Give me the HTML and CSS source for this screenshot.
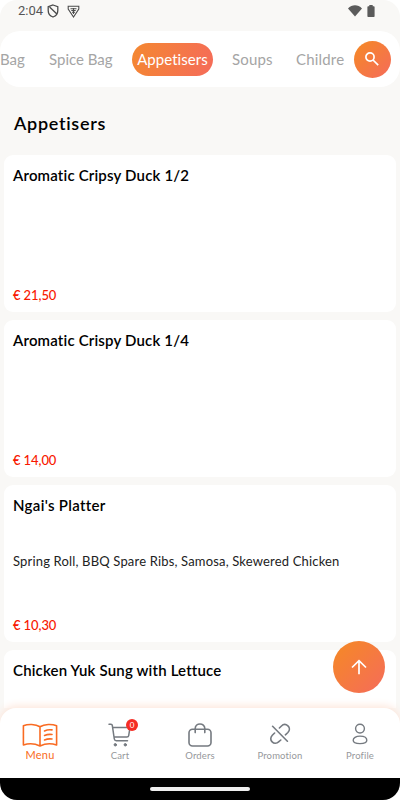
FILE: index.html
```html
<!DOCTYPE html>
<html lang="en">
<head>
<meta charset="utf-8">
<title>Menu</title>
<link rel="stylesheet" href="styles.css">
</head>
<body>
<div class="phone">
  <header class="status">
    <span class="clock">2:04</span>
    <svg class="shield" width="12" height="14" viewBox="0 0 12 14" fill="none" stroke="#4b4b4b" stroke-width="1.3"><path d="M6 1 L10.8 2.7 V6.5 C10.8 9.6 8.8 12 6 13 C3.2 12 1.2 9.6 1.2 6.5 V2.7 Z M2.6 3 L9.9 10"/></svg>
    <svg class="guard" width="13" height="13" viewBox="0 0 13 13" fill="none" stroke="#4b4b4b" stroke-width="1.1"><path d="M1.2 1.2 H11.8 V4 L6.5 12 L1.2 4 Z M3.5 3.7 H9.5 M4.3 5.5 H8.7 M5 7.2 H8 M6.5 3 V9"/></svg>
    <svg class="wifi" width="14" height="12" viewBox="0 0 14 12" fill="#5b5b5b"><path d="M0 3.4 C4-.9 10-.9 14 3.4 L7 11.4 Z"/></svg>
    <svg class="battery" width="8" height="12" viewBox="0 0 8 12" fill="#5b5b5b"><path d="M2.3 0 H5.7 V1.3 H6.8 Q7.6 1.3 7.6 2.1 V11.2 Q7.6 12 6.8 12 H1.2 Q.4 12 .4 11.2 V2.1 Q.4 1.3 1.2 1.3 H2.3 Z"/></svg>
  </header>
  <nav class="tabs">
    <div class="track">
      <span class="tab first">Bag</span>
      <span class="tab spice">Spice Bag</span>
      <span class="tab active">Appetisers</span>
      <span class="tab soups">Soups</span>
      <span class="tab">Childre</span>
    </div>
    <button class="search" aria-label="Search"><svg width="14" height="14" viewBox="0 0 14 14" fill="none" stroke="#fff" stroke-width="1.7"><circle cx="5" cy="5" r="4.1"/><path d="M8 8 L13.2 13.2"/></svg></button>
  </nav>
  <main class="content">
    <h1>Appetisers</h1>
    <section class="list">
      <article class="card"><h2>Aromatic Cripsy Duck 1/2</h2><p></p><b>€ 21,50</b></article>
      <article class="card"><h2>Aromatic Crispy Duck 1/4</h2><p></p><b>€ 14,00</b></article>
      <article class="card"><h2 class="platter">Ngai's Platter</h2><p>Spring Roll, BBQ Spare Ribs, Samosa, Skewered Chicken</p><b>€ 10,30</b></article>
      <article class="card"><h2>Chicken Yuk Sung with Lettuce</h2></article>
    </section>
  </main>
  <button class="top" aria-label="Back to top"><svg width="16" height="16" viewBox="0 0 16 16" fill="none" stroke="#fff" stroke-width="1.7"><path d="M8 15.3 V2 M1 8.5 L8 1.6 L15 8.5"/></svg></button>
  <footer class="bar">
    <a class="item current">
      <svg width="36" height="25" viewBox="0 0 36 25" fill="none" stroke="#f96b22" stroke-width="1.6" stroke-linejoin="round" stroke-linecap="round"><path d="M18 3.8 C13.5 1 6 .9 1.4 2.8 V22 C7 20.2 13 20.6 18 23 C23 20.6 29 20.2 34.6 22 V2.8 C30 .9 22.5 1 18 3.8 V23 M22.5 7.9 Q26 6.3 30 6.9 M22.5 12.4 Q26 11 30 11.5 M22.5 16.9 Q26 15.5 30 16"/></svg>
      <span>Menu</span>
    </a>
    <a class="item cart">
      <svg width="24" height="24" viewBox="0 0 24 24" fill="none" stroke="#757a80" stroke-width="1.5" stroke-linecap="round" stroke-linejoin="round"><path d="M1 1.2 H3 Q4 1.2 4.3 2.3 L6.3 16 Q6.6 17.8 8.2 17.8 H19.5 M5 4.4 H22 L20.7 12.6 Q20.4 14 19 14 H6.2"/><circle cx="7.3" cy="21.8" r="1.2" fill="#757a80" stroke-width="1"/><circle cx="17.3" cy="21.8" r="1.2" fill="#757a80" stroke-width="1"/></svg>
      <i class="badge">0</i>
      <span>Cart</span>
    </a>
    <a class="item orders">
      <svg width="24" height="24" viewBox="0 0 24 24" fill="none" stroke="#757a80" stroke-width="1.6" stroke-linecap="round"><rect x="1" y="6.3" width="22" height="16.7" rx="3.5"/><path d="M7.2 9.6 V5.6 C7.2-.6 16.8-.6 16.8 5.6 V9.6"/></svg>
      <span>Orders</span>
    </a>
    <a class="item promo">
      <svg width="22" height="22" viewBox="0 0 22 22" fill="none" stroke="#757a80" stroke-width="1.6" stroke-linecap="round"><path d="M3.6 3.3 L18.4 18.2 M10.4 5 L12.2 3.2 C16.8-1.3 23.3 4.8 18.9 9.5 L16.4 11.8 M11.8 17 L9.9 18.6 C5.2 23.2-1.2 16.9 3.3 12.3 L5.6 10"/></svg>
      <span>Promotion</span>
    </a>
    <a class="item profile">
      <svg width="16" height="22" viewBox="0 0 16 22" fill="none" stroke="#757a80" stroke-width="1.4"><circle cx="8" cy="5.6" r="4.4"/><path d="M8 13.1 C3.8 13.1 1.2 14.9 1.2 17.2 C1.2 19.8 4 20.6 8 20.6 C12 20.6 14.8 19.8 14.8 17.2 C14.8 14.9 12.2 13.1 8 13.1 Z"/></svg>
      <span>Profile</span>
    </a>
  </footer>
  <div class="system"><div class="handle"></div></div>
</div>
</body>
</html>
```

FILE: styles.css
```css
* { box-sizing: border-box; }
body { margin: 0; background: #fff; font-family: Lato, sans-serif; }
h1, h2, p { margin: 0; }
button { border: 0; padding: 0; display: flex; align-items: center; justify-content: center; background: linear-gradient(135deg, #f5852c 15%, #f56d58 95%); border-radius: 50%; }
.phone { position: relative; width: 400px; height: 800px; overflow: hidden; border-radius: 17px; background: #f9f8f6; display: flex; flex-direction: column; }
.status { height: 31px; flex: none; display: flex; align-items: flex-start; padding: 4px 25px 0 18px; }
.clock { width: 29px; font: 13px/14px Roboto, sans-serif; letter-spacing: 0; color: #555; }
.guard { margin: 1px 0 0 8px; }
.wifi { margin: 1px 5px 0 auto; }
.battery { margin-top: 1px; }
.tabs { height: 56px; flex: none; border-radius: 20px; background: #fff; display: flex; align-items: center; }
.track { width: 345px; margin-right: 9px; overflow: hidden; display: flex; align-items: center; white-space: nowrap; }
.tab { flex: none; font-size: 15px; line-height: 32px; letter-spacing: .05px; color: #a5a5a5; }
.first { width: 49px; }
.spice { width: 83px; }
.active { width: 81px; height: 33px; border-radius: 17px; text-align: center; color: #fff; background: linear-gradient(110deg, #f48830, #f56b5a); margin-right: 19px; }
.soups { width: 64px; }
.soups, .tab:last-child { letter-spacing: .18px; }
.spice, .first { letter-spacing: 0; }
.search { width: 37px; height: 37px; flex: none; }
.search svg { margin: 0 1px 1px 0; }
.content { flex: 1; overflow: hidden; }
h1 { height: 68px; padding: 25px 14px 0; font-size: 18px; line-height: 23px; font-weight: 600; letter-spacing: .7px; }
.list { display: flex; flex-direction: column; gap: 8px; padding: 0 4px; }
.card { height: 157px; flex: none; border-radius: 9px; background: #fff; padding: 11px 9px 8px; display: flex; flex-direction: column; justify-content: space-between; }
h2 { font-size: 15px; line-height: 19px; font-weight: 600; letter-spacing: .17px; }
.platter { letter-spacing: .32px; }
.card p { font-size: 13px; line-height: 18px; height: 18px; color: #222; letter-spacing: .17px; margin-top: -10px; }
.card b { font-size: 13px; line-height: 17px; font-weight: 500; letter-spacing: -.1px; color: #f81800; }
.top { position: absolute; left: 333px; top: 641px; width: 52px; height: 52px; }
.bar { position: relative; flex: none; height: 70px; border-radius: 16px 16px 0 0; background: #fff; display: flex; box-shadow: 0 -2px 8px #fde5d9; }
.item { position: relative; width: 80px; display: flex; flex-direction: column; align-items: center; padding-top: 15px; color: #96989b; font-size: 9.5px; line-height: 12px; letter-spacing: .15px; }
.item span { margin-top: auto; margin-bottom: 16px; }
.current { color: #f96b22; font-size: 11px; letter-spacing: .25px; }
.item.current span { margin-bottom: 17px; }
.badge { position: absolute; left: 46px; top: 11px; width: 12px; height: 12px; border-radius: 50%; background: #f52d24; color: #fff; font-style: normal; font-size: 8px; line-height: 13px; text-align: center; letter-spacing: 0; }
.system { position: relative; flex: none; height: 22px; background: #000; padding: 9px 150px 0; }
.handle { height: 4px; border-radius: 2px; background: #eee; }
```
